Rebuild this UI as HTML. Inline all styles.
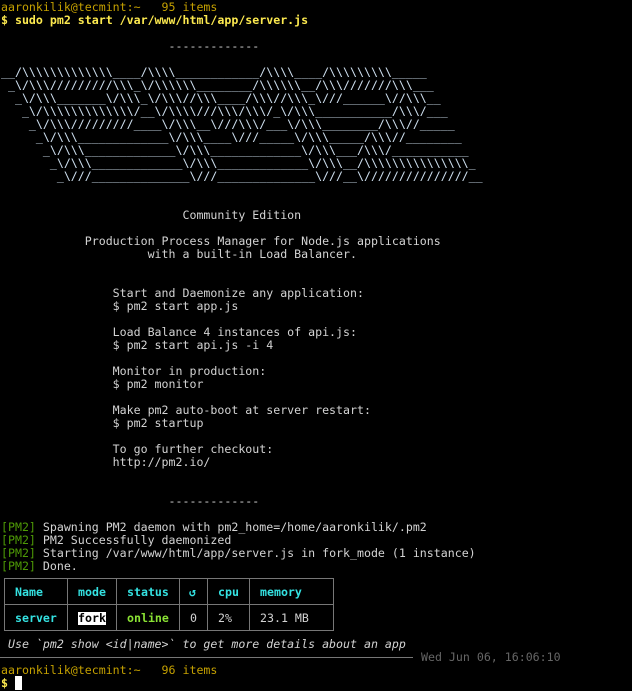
<!DOCTYPE html>
<html><head><style>
body{margin:0;background:#000;width:632px;height:691px;overflow:hidden;position:relative}
pre{margin:0;position:absolute;left:1px;top:1px;font-family:"DejaVu Sans Mono","Liberation Mono",monospace;font-size:11.6px;line-height:13px;color:#d3d3d3}
.o{color:#c4a000}.y{color:#fce94f;font-weight:bold}.a{color:#cfe0f0}.g{color:#4e9a06}
.t{position:absolute;font-family:"DejaVu Sans Mono","Liberation Mono",monospace;font-size:11.6px;line-height:13px;white-space:pre}
.c{color:#34e2e2;font-weight:bold}.n{color:#8ae234;font-weight:bold}
.b{position:absolute;background:#777}
</style></head><body>
<pre><span class="o">aaronkilik@tecmint:~   95 items</span>
<span class="y">$ sudo pm2 start /var/www/html/app/server.js</span>

                        -------------

<span class="a">__/\\\\\\\\\\\\\____/\\\\____________/\\\\____/\\\\\\\\\_____
 _\/\\\/////////\\\_\/\\\\\\________/\\\\\\__/\\\///////\\\___
  _\/\\\_______\/\\\_\/\\\//\\\____/\\\//\\\_\///______\//\\\__
   _\/\\\\\\\\\\\\\/__\/\\\\///\\\/\\\/_\/\\\___________/\\\/___
    _\/\\\/////////____\/\\\__\///\\\/___\/\\\________/\\\//_____
     _\/\\\_____________\/\\\____\///_____\/\\\_____/\\\//________
      _\/\\\_____________\/\\\_____________\/\\\___/\\\/___________
       _\/\\\_____________\/\\\_____________\/\\\__/\\\\\\\\\\\\\\\_
        _\///______________\///______________\///__\///////////////__</span>


                          Community Edition

            Production Process Manager for Node.js applications
                     with a built-in Load Balancer.


                Start and Daemonize any application:
                $ pm2 start app.js

                Load Balance 4 instances of api.js:
                $ pm2 start api.js -i 4

                Monitor in production:
                $ pm2 monitor

                Make pm2 auto-boot at server restart:
                $ pm2 startup

                To go further checkout:
                http://pm2.io/


                        -------------

<span class="g">[PM2]</span> Spawning PM2 daemon with pm2_home=/home/aaronkilik/.pm2
<span class="g">[PM2]</span> PM2 Successfully daemonized
<span class="g">[PM2]</span> Starting /var/www/html/app/server.js in fork_mode (1 instance)
<span class="g">[PM2]</span> Done.





<i> Use `pm2 show &lt;id|name&gt;` to get more details about an app</i>

<span class="o">aaronkilik@tecmint:~   96 items</span>
<span class="y">$</span> <span style="background:#fff">&nbsp;</span></pre>
<span class="t" style="left:421px;top:651px;color:#666">Wed Jun 06, 16:06:10</span>
<div class="b" style="left:0;top:657px;width:413px;height:1px"></div>
<div class="b" style="left:4px;top:578px;width:330px;height:1px"></div>
<div class="b" style="left:4px;top:604px;width:330px;height:1px"></div>
<div class="b" style="left:4px;top:630px;width:330px;height:1px"></div>
<div class="b" style="left:4px;top:578px;width:1px;height:53px"></div>
<div class="b" style="left:67px;top:578px;width:1px;height:53px"></div>
<div class="b" style="left:116px;top:578px;width:1px;height:53px"></div>
<div class="b" style="left:179px;top:578px;width:1px;height:53px"></div>
<div class="b" style="left:207px;top:578px;width:1px;height:53px"></div>
<div class="b" style="left:249px;top:578px;width:1px;height:53px"></div>
<div class="b" style="left:333px;top:578px;width:1px;height:53px"></div>
<span class="t c" style="left:15px;top:586px">Name</span>
<span class="t c" style="left:78px;top:586px">mode</span>
<span class="t c" style="left:127px;top:586px">status</span>
<span class="t c" style="left:189px;top:586px">↺</span>
<span class="t c" style="left:218px;top:586px">cpu</span>
<span class="t c" style="left:260px;top:586px">memory</span>
<span class="t c" style="left:15px;top:612px">server</span>
<span class="t" style="left:78px;top:612px;background:#fff;color:#000;font-weight:bold">fork</span>
<span class="t n" style="left:127px;top:612px">online</span>
<span class="t" style="left:190px;top:612px;color:#d3d3d3">0</span>
<span class="t" style="left:218px;top:612px;color:#d3d3d3">2%</span>
<span class="t" style="left:260px;top:612px;color:#d3d3d3">23.1 MB</span>
</body></html>
